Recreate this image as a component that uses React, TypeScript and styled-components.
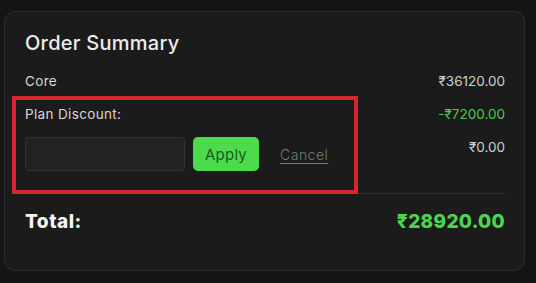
import React from "react";
import styled, { createGlobalStyle } from "styled-components";

const Global = createGlobalStyle`
  html, body { margin: 0; padding: 0; background: #141414; }
  body { font-family: Inter, "Noto Sans", sans-serif; }
  * { box-sizing: border-box; }
`;

const Page = styled.div`
  width: 536px;
  height: 283px;
  padding: 11px 11px 12px 4px;
  background: #141414;
`;

const Card = styled.section`
  position: relative;
  width: 521px;
  height: 260px;
  background: #1b1b1b;
  border: 1px solid #2e2e2e;
  border-radius: 11px;
  padding: 17px 19px 0 20px;
  display: flex;
  flex-direction: column;
`;

const Title = styled.h2`
  margin: 0;
  font-size: 20px;
  line-height: 28px;
  font-weight: 500;
  color: #ececec;
  letter-spacing: 0.25px;
`;

const Row = styled.div<{ $mt: number }>`
  display: flex;
  justify-content: space-between;
  align-items: center;
  margin-top: ${(p) => p.$mt}px;
  height: 20px;
`;

const Label = styled.span`
  font-size: 13.5px;
  color: #d6d6d6;
  letter-spacing: 0.35px;
`;

const Value = styled.span<{ $green?: boolean }>`
  font-size: 13.5px;
  color: ${(p) => (p.$green ? "#4ccb4c" : "#cfcfcf")};
`;

const InputRow = styled.div`
  display: flex;
  justify-content: space-between;
  align-items: flex-start;
  margin-top: 13px;
  height: 34px;
`;

const Controls = styled.div`
  display: flex;
  align-items: center;
  gap: 8px;
`;

const CodeInput = styled.input`
  width: 160px;
  height: 34px;
  background: #222222;
  border: 1px solid #323232;
  border-radius: 4px;
  outline: none;
  color: #ddd;
`;

const ApplyButton = styled.button`
  width: 66px;
  height: 34px;
  border: none;
  border-radius: 5px;
  background: #4ddb4d;
  color: #1c5a1c;
  font-family: inherit;
  font-size: 15px;
  letter-spacing: 0.2px;
  padding: 0;
`;

const CancelLink = styled.a`
  margin-left: 13px;
  font-size: 14px;
  color: #7a7a7a;
  text-decoration: underline;
  text-underline-offset: 3px;
  font-weight: 300;
  letter-spacing: 0.5px;
`;

const SideValue = styled(Value)`
  line-height: 20px;
`;

const Divider = styled.hr`
  margin: 22px 0 0 0;
  border: none;
  border-top: 1px solid #323232;
  width: 100%;
`;

const TotalRow = styled.div`
  display: flex;
  justify-content: space-between;
  align-items: center;
  margin-top: 13px;
  height: 28px;
`;

const TotalLabel = styled.span`
  font-size: 19px;
  font-weight: 800;
  color: #f4f4f4;
  letter-spacing: 0.5px;
`;

const TotalValue = styled.span`
  font-size: 19px;
  font-weight: 800;
  color: #4cd64c;
  letter-spacing: 0.3px;
`;

const Highlight = styled.div`
  position: absolute;
  left: 7px;
  top: 84px;
  width: 346px;
  height: 98px;
  border: 4px solid #d6252f;
  pointer-events: none;
`;

export default function App() {
  return (
    <Page>
      <Global />
      <Card>
        <Title>Order Summary</Title>
        <Row $mt={14}>
          <Label>Core</Label>
          <Value>₹36120.00</Value>
        </Row>
        <Row $mt={13}>
          <Label>Plan Discount:</Label>
          <Value $green>-₹7200.00</Value>
        </Row>
        <InputRow>
          <Controls>
            <CodeInput />
            <ApplyButton>Apply</ApplyButton>
            <CancelLink>Cancel</CancelLink>
          </Controls>
          <SideValue>₹0.00</SideValue>
        </InputRow>
        <Divider />
        <TotalRow>
          <TotalLabel>Total:</TotalLabel>
          <TotalValue>₹28920.00</TotalValue>
        </TotalRow>
        <Highlight />
      </Card>
    </Page>
  );
}
